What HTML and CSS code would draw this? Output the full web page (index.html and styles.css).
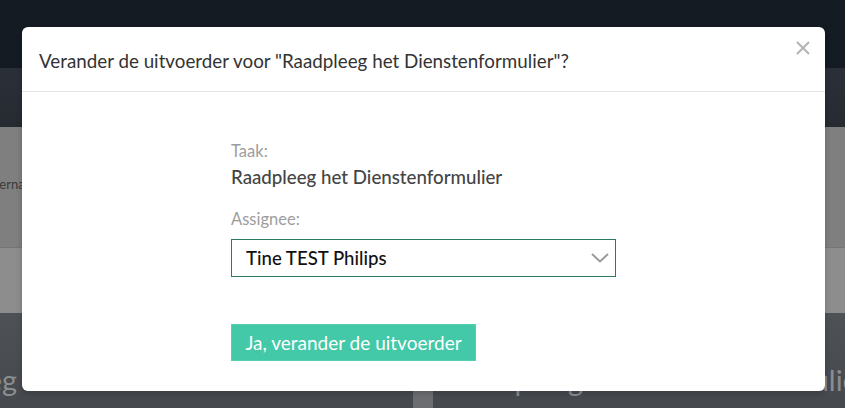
FILE: index.html
```html
<!DOCTYPE html>
<html lang="nl">
<head>
    <meta charset="UTF-8">
    <meta name="viewport" content="width=device-width, initial-scale=1.0">
    <title>Verander de uitvoerder</title>
    <link rel="stylesheet" href="styles.css">
</head>
<body>
    <div class="page">
        <div class="topbar"></div>
        <div class="subbar"></div>
        <div class="panel">
            <span class="panel-text">Interna</span>
        </div>
        <div class="panel-row"></div>
        <div class="cards">
            <div class="card card-left">Raadpleeg het formulier in</div>
            <div class="card-divider"></div>
            <div class="card card-right">Raadpleeg het Dienstenformulier</div>
        </div>
    </div>

    <div class="modal">
        <div class="modal-header">
            <h2>Verander de uitvoerder voor "Raadpleeg het Dienstenformulier"?</h2>
            <button class="close-button" aria-label="Sluiten">
                <svg width="14" height="14" viewBox="0 0 14 14">
                    <path d="M1 1 L13 13 M13 1 L1 13" stroke="#b3b3b3" stroke-width="2" fill="none"/>
                </svg>
            </button>
        </div>
        <div class="modal-body">
            <div class="field-label">Taak:</div>
            <div class="field-value">Raadpleeg het Dienstenformulier</div>

            <div class="field-label assignee-label">Assignee:</div>
            <div class="select-box">
                <span>Tine TEST Philips</span>
                <svg width="18" height="10" viewBox="0 0 18 10">
                    <path d="M1 1 L9 8.5 L17 1" stroke="#9a9a9a" stroke-width="2" fill="none"/>
                </svg>
            </div>

            <button class="confirm-button">Ja, verander de uitvoerder</button>
        </div>
    </div>
</body>
</html>
```

FILE: styles.css
```css
* {
    margin: 0;
    padding: 0;
    box-sizing: border-box;
}

body {
    font-family: Lato, 'Open Sans', sans-serif;
    width: 845px;
    height: 408px;
    overflow: hidden;
    position: relative;
    background: #4b4e53;
}

/* dimmed page behind the modal */
.page {
    display: flex;
    flex-direction: column;
    height: 100%;
}

.topbar {
    height: 68px;
    background: #151b23;
}

.subbar {
    height: 59px;
    background: linear-gradient(180deg, #2b2f37 0%, #262a31 100%);
}

.panel {
    height: 120px;
    background: #7f7f7f;
    display: flex;
    align-items: center;
    padding-bottom: 6px;
    overflow: hidden;
}

.panel-text {
    margin-left: -16px;
    font-size: 13px;
    color: #3a3a3a;
}

.panel-row {
    height: 66px;
    background: #8d8d8d;
    border-top: 1px solid #767676;
}

.cards {
    flex: 1;
    display: flex;
    background: linear-gradient(180deg, #4e5156 0%, #45484d 100%);
    overflow: hidden;
}

.card {
    font-size: 28.8px;
    color: #8b8d90;
    white-space: nowrap;
    padding-top: 50px;
    overflow: hidden;
}

.card-left {
    width: 413px;
    text-indent: -114px;
}

.card-divider {
    width: 20px;
    margin-top: 64px;
    background: #6c6d70;
}

.card-right {
    flex: 1;
    padding-left: 19px;
}

/* modal */
.modal {
    position: absolute;
    left: 22px;
    top: 27px;
    width: 803px;
    height: 364px;
    background: #fff;
    border-radius: 6px;
    box-shadow: 0 2px 6px rgba(0, 0, 0, 0.2);
}

.modal-header {
    height: 65px;
    border-bottom: 1px solid #e3e3e3;
    display: flex;
    align-items: center;
    padding: 2px 0 0 17px;
    position: relative;
}

.modal-header h2 {
    font-size: 18.8px;
    font-weight: 400;
    color: #333;
}

.close-button {
    position: absolute;
    right: 15px;
    top: 14px;
    width: 14px;
    height: 14px;
    border: none;
    background: none;
    display: flex;
}

.modal-body {
    padding: 48px 0 0 209px;
}

.field-label {
    font-size: 16.5px;
    line-height: 22px;
    color: #9d9d9d;
    margin-bottom: 3px;
}

.field-value {
    font-size: 18.7px;
    line-height: 24px;
    font-weight: 500;
    color: #444;
}

.assignee-label {
    margin-top: 19px;
    margin-bottom: 9px;
}

.select-box {
    width: 385px;
    height: 38px;
    border: 1px solid #2b7a64;
    display: flex;
    align-items: center;
    justify-content: space-between;
    padding: 0 6px 0 14px;
    font-size: 18.6px;
    font-weight: 500;
    color: #111;
}

.confirm-button {
    margin-top: 47px;
    width: 245px;
    height: 37px;
    background: #43c8a8;
    border: 1px solid #55d0b2;
    color: #fff;
    font-family: inherit;
    font-size: 19px;
}
```
